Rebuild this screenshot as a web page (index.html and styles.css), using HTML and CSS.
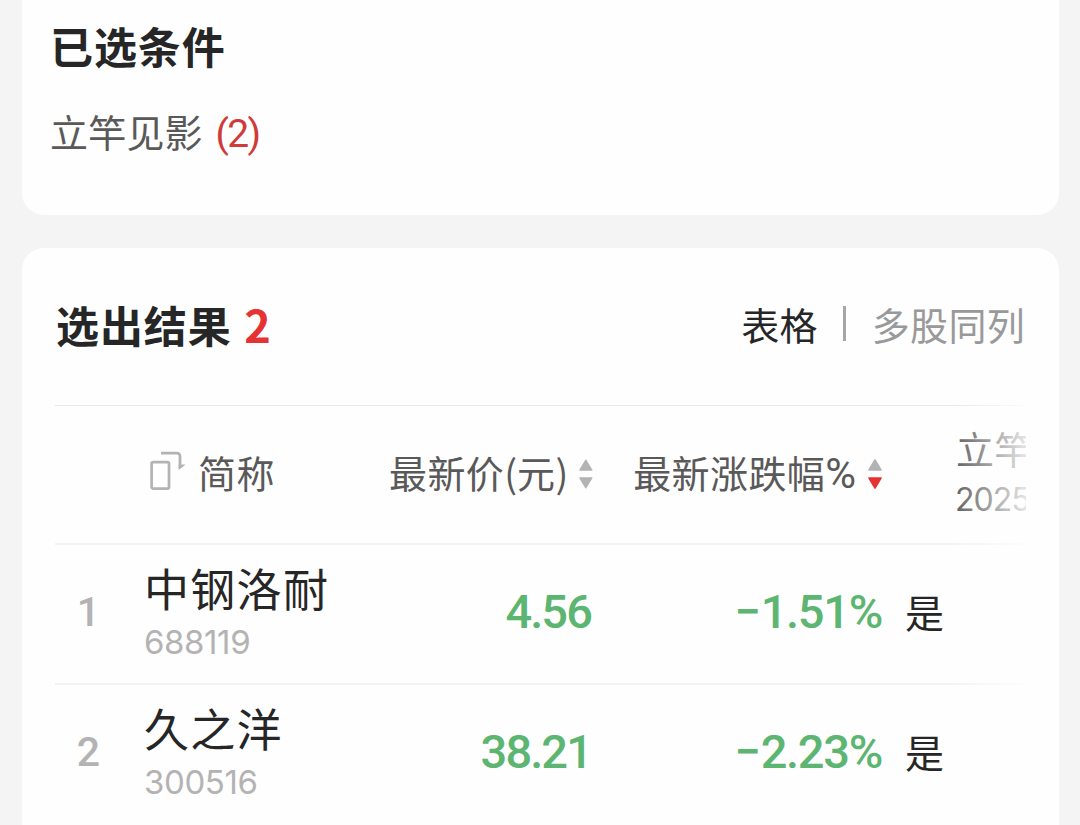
FILE: index.html
```
<!DOCTYPE html>
<html lang="zh-CN">

<head>
    <meta charset="UTF-8">
    <title>选股结果</title>
    <link rel="stylesheet" href="styles.css">
</head>

<body>
    <div class="card conditions">
        <h2 class="title">已选条件</h2>
        <div class="condition">立竿见影 <span class="count">(2)</span></div>
    </div>

    <div class="card results">
        <div class="results-head">
            <h2 class="title">选出结果 <span class="total">2</span></h2>
            <div class="tabs">
                <span class="tab active">表格</span>
                <span class="divider"></span>
                <span class="tab">多股同列</span>
            </div>
        </div>

        <div class="table">
            <div class="row header">
                <div></div>
                <div class="name-head">
                    <svg class="rotate" width="36" height="40" viewBox="0 0 36 40">
                        <rect x="2.6" y="12.2" width="17.4" height="26.4" rx="1.5" fill="none" stroke="#b3b3b3" stroke-width="2.7" />
                        <path d="M12 3.2H28a3 3 0 0 1 3 3V18" fill="none" stroke="#b3b3b3" stroke-width="2.8" />
                        <path d="M29.7 20V14.5H36.5Z" fill="#b3b3b3" />
                    </svg>
                    <span class="label">简称</span>
                </div>
                <div class="sort-head">
                    <span class="label">最新价<i class="paren">(</i>元<i class="paren">)</i></span>
                    <svg class="sort" width="16" height="34" viewBox="0 0 16 34">
                        <path d="M8 3L14 13H2Z" class="arrow" />
                        <path d="M8 31L14 21H2Z" class="arrow" />
                    </svg>
                </div>
                <div class="sort-head">
                    <span class="label">最新涨跌幅<i class="percent">%</i></span>
                    <svg class="sort" width="16" height="34" viewBox="0 0 16 34">
                        <path d="M8 3L14 13H2Z" class="arrow" />
                        <path d="M8 31L14 21H2Z" class="arrow on" />
                    </svg>
                </div>
                <div class="signal-head">
                    <div>立竿</div>
                    <div class="date">2025</div>
                </div>
            </div>

            <div class="row">
                <div class="index">1</div>
                <div class="stock">
                    <div class="stock-name">中钢洛耐</div>
                    <div class="code">688119</div>
                </div>
                <div class="number price">4.56</div>
                <div class="number"><span class="minus">−</span>1.51%</div>
                <div class="signal">是</div>
            </div>

            <div class="row">
                <div class="index">2</div>
                <div class="stock">
                    <div class="stock-name">久之洋</div>
                    <div class="code">300516</div>
                </div>
                <div class="number price">38.21</div>
                <div class="number"><span class="minus">−</span>2.23%</div>
                <div class="signal">是</div>
            </div>
            <div class="fade"></div>
        </div>
    </div>
</body>

</html>
```
FILE: styles.css
```
* {
    box-sizing: border-box;
}

body {
    margin: 0;
    height: 825px;
    overflow: hidden;
    padding: 0 21px 0 22px;
    background-color: #f4f4f4;
    color: #262626;
    font-family: "Noto Sans CJK SC", sans-serif;
    white-space: nowrap;
}

.card {
    background-color: #fefefe;
    border-radius: 22px;
}

.title {
    margin: 0;
    font-size: 43px;
    line-height: 60px;
    font-weight: 700;
    letter-spacing: 0.9px;
}

.conditions {
    height: 215px;
    padding: 15px 28px 0;
    border-radius: 0 0 22px 22px;
}

.condition {
    margin-top: 28px;
    font-size: 38px;
    line-height: 56px;
    letter-spacing: 0.2px;
    color: #595959;
}

.count {
    margin-left: 4px;
    font-family: Roboto, sans-serif;
    font-size: 39px;
    letter-spacing: -1.6px;
    color: #cf3a3a;
}

.results {
    height: 600px;
    margin-top: 33px;
    padding: 0 33px;
}

.results-head {
    display: flex;
    justify-content: space-between;
    align-items: center;
    height: 157px;
    padding: 0 1px 6px 1px;
}

.total {
    margin-left: 2px;
    font-size: 45px;
    color: #e63232;
}

.tabs {
    display: flex;
    align-items: center;
    font-size: 38px;
    letter-spacing: 0.3px;
}

.tab {
    color: #999;
}

.tab.active {
    color: #262626;
}

.divider {
    width: 3px;
    height: 35px;
    margin: 0 26px 0 25px;
    background-color: #a6a6a6;
}

.table {
    position: relative;
    border-top: 1px solid #e8e8e8;
}

.row {
    display: grid;
    grid-template-columns: 89px 245px 205px 289px 1fr;
    align-items: center;
    height: 140px;
    padding-bottom: 6px;
    border-bottom: 2px solid #f3f3f3;
}

.row:nth-child(3) {
    border-bottom-color: transparent;
}

.header {
    height: 139px;
    padding-bottom: 0;
    font-size: 38px;
    letter-spacing: 0.4px;
    color: #595959;
}

.name-head,
.sort-head {
    display: flex;
    align-items: center;
}

.name-head {
    padding-left: 5px;
}

.label {
    padding-bottom: 6px;
}

.rotate {
    margin: -10px 13px 0 0;
}

.sort-head {
    justify-content: flex-end;
}

.sort {
    margin: -2px 0 0 10px;
}

.arrow {
    fill: #b3b3b3;
    stroke: #b3b3b3;
    stroke-width: 1.6;
    stroke-linejoin: round;
}

.arrow.on {
    fill: #e63232;
    stroke: #e63232;
}

.paren,
.percent {
    font-style: normal;
    letter-spacing: 0;
}

.percent {
    padding-right: 1px;
    font-family: Roboto, sans-serif;
    font-size: 42px;
}

.signal-head {
    padding: 0 0 4px 73px;
    line-height: 50px;
    overflow: hidden;
}

.date {
    padding-top: 2px;
    margin: 0 0 -2px -1px;
    font-family: Inter, sans-serif;
    font-size: 32px;
    letter-spacing: -1px;
}

.index {
    padding: 1px 22px 0 0;
    text-align: center;
    font-family: Roboto, sans-serif;
    font-weight: 500;
    font-size: 41px;
    color: #b3b3b3;
}

.stock-name {
    font-size: 45px;
    line-height: 58px;
    letter-spacing: 1.3px;
}

.code {
    padding-top: 2px;
    margin-bottom: -2px;
    font-family: Inter, sans-serif;
    font-size: 33px;
    line-height: 46px;
    letter-spacing: -0.4px;
    color: #b3b3b3;
}

.number {
    padding-right: 1px;
    text-align: right;
    font-family: Roboto, sans-serif;
    font-weight: 500;
    font-size: 47px;
    letter-spacing: -1.3px;
    color: #5cb570;
}

.price {
    padding-right: 3px;
    letter-spacing: -1.9px;
}

.minus {
    margin-right: 1px;
}

.signal {
    padding-left: 22px;
    font-size: 39px;
}

/* scroll hint over the cut-off column */
.fade {
    position: absolute;
    top: -1px;
    right: 0;
    bottom: 0;
    width: 76px;
    background: linear-gradient(to right, rgba(254, 254, 254, 0), rgba(254, 254, 254, 0.85));
}
```
